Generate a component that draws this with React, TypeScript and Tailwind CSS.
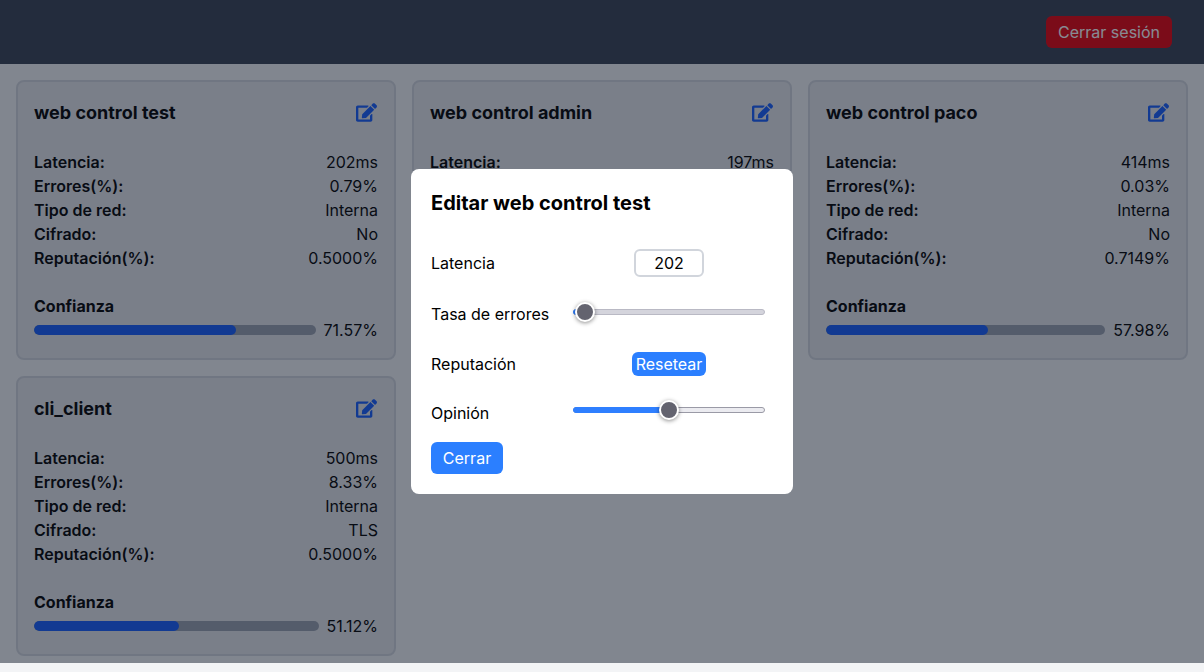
import { FaEdit } from "react-icons/fa";

interface Client {
  name: string;
  latency: string;
  errors: string;
  network: string;
  cipher: string;
  reputation: string;
  trust: number;
}

const clients: Client[] = [
  { name: "web control test", latency: "202ms", errors: "0.79%", network: "Interna", cipher: "No", reputation: "0.5000%", trust: 71.57 },
  { name: "web control admin", latency: "197ms", errors: "0.12%", network: "Interna", cipher: "No", reputation: "0.5000%", trust: 64.2 },
  { name: "web control paco", latency: "414ms", errors: "0.03%", network: "Interna", cipher: "No", reputation: "0.7149%", trust: 57.98 },
  { name: "cli_client", latency: "500ms", errors: "8.33%", network: "Interna", cipher: "TLS", reputation: "0.5000%", trust: 51.12 },
];

function Row({ label, value }: { label: string; value: string }) {
  return (
    <div className="flex justify-between h-6 leading-6">
      <span className="font-semibold">{label}</span>
      <span>{value}</span>
    </div>
  );
}

function ClientCard({ client }: { client: Client }) {
  return (
    <div className="h-[280px] bg-gray-200 border-2 border-gray-300 rounded-lg p-4 text-black">
      <div className="flex items-center justify-between h-[30px] mb-[22px]">
        <h2 className="text-lg font-bold">{client.name}</h2>
        <button className="text-blue-600 mr-px">
          <FaEdit className="w-[21px] h-[21px] -mt-[2px]" />
        </button>
      </div>
      <Row label="Latencia:" value={client.latency} />
      <Row label="Errores(%):" value={client.errors} />
      <Row label="Tipo de red:" value={client.network} />
      <Row label="Cifrado:" value={client.cipher} />
      <Row label="Reputación(%):" value={client.reputation} />
      <div className="mt-6 font-bold leading-6">Confianza</div>
      <div className="flex items-center gap-2 h-6">
        <div className="flex-1 h-2.5 bg-gray-400 rounded-full overflow-hidden">
          <div className="h-full bg-blue-600 rounded-full" style={{ width: `${client.trust}%` }} />
        </div>
        <span>{client.trust}%</span>
      </div>
    </div>
  );
}

function Slider({ percent, trackClass }: { percent: number; trackClass: string }) {
  return (
    <div className={`relative w-[192px] h-[6px] rounded-full border ${trackClass}`}>
      <div className="h-full -m-px box-content border border-[#2f7fff] bg-[#2f7fff] rounded-full" style={{ width: `${percent}%` }} />
      <div
        className="absolute top-1/2 w-5 h-5 -translate-x-1/2 -translate-y-1/2 rounded-full bg-[#63636f] border-2 border-white shadow-[0_1px_4px_rgba(0,0,0,0.45)]"
        style={{ left: `calc(${percent}% + ${(50 - percent) * 0.16}px)` }}
      />
    </div>
  );
}

function EditModal() {
  return (
    <div className="w-[382px] bg-white rounded-lg p-5 text-black">
      <h3 className="text-xl font-bold leading-7">Editar web control test</h3>

      <div className="flex items-center mt-8 h-7">
        <span className="w-[142px]">Latencia</span>
        <div className="w-[192px] flex justify-center">
          <div className="w-[70px] h-7 border-2 border-gray-300 rounded-md text-center leading-6">202</div>
        </div>
      </div>

      <div className="flex items-center mt-[25px] h-6">
        <span className="w-[142px]">Tasa de errores</span>
        <div className="mb-1">
          <Slider percent={2} trackClass="border-[#b9b9c4] bg-[#d4d4dc]" />
        </div>
      </div>

      <div className="flex items-center mt-[26px] h-6">
        <span className="w-[142px]">Reputación</span>
        <div className="w-[192px] flex justify-center">
          <button className="w-[74px] h-6 bg-blue-500 text-white rounded-md leading-6">Resetear</button>
        </div>
      </div>

      <div className="flex items-center mt-[25px] h-6">
        <span className="w-[142px]">Opinión</span>
        <div className="mb-1.5">
          <Slider percent={50} trackClass="border-[#9a9aa6] bg-[#ebebf0]" />
        </div>
      </div>

      <button className="mt-[17px] block w-[72px] h-8 bg-blue-500 text-white rounded-md">Cerrar</button>
    </div>
  );
}

export default function App() {
  return (
    <div className="relative min-h-[672px] bg-gray-100 font-['Inter',sans-serif] text-base">
      <header className="h-16 bg-gray-700 flex items-center justify-end pr-8">
        <button className="h-8 px-3 bg-red-600 text-white rounded-md">Cerrar sesión</button>
      </header>
      <main className="grid grid-cols-3 gap-4 p-4">
        {clients.map((c) => (
          <ClientCard key={c.name} client={c} />
        ))}
      </main>
      {/* Dialog overlay stops short of the page bottom, as in the capture */}
      <div className="absolute top-0 left-0 w-full h-[663px] bg-gray-900/50 flex items-center justify-center">
        <EditModal />
      </div>
    </div>
  );
}
